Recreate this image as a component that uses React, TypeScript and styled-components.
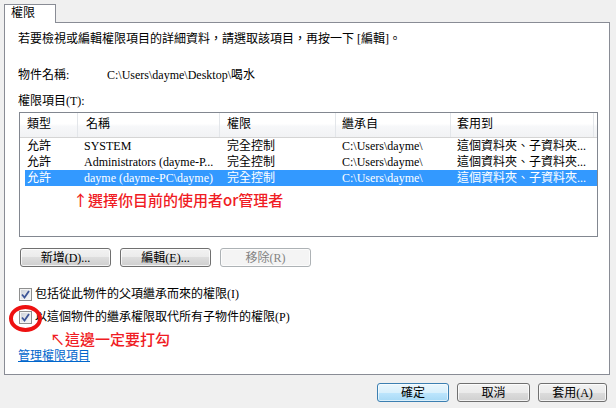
import React from "react";
import styled, { createGlobalStyle } from "styled-components";

const FONT = `"Liberation Serif", "Noto Sans CJK TC", serif`;
const CJK = `"Noto Sans CJK TC", "Liberation Sans", sans-serif`;

const Global = createGlobalStyle`
  html, body { margin: 0; padding: 0; background: #f0f0f0; }
  body { font-family: ${FONT}; font-size: 12px; color: #000; }
  #root { width: 616px; height: 408px; }
`;

const Window = styled.div`
  width: 616px;
  height: 408px;
  box-sizing: border-box;
  padding: 4px 6px 0 4px;
  display: flex;
  flex-direction: column;
  background: #f0f0f0;
  overflow: hidden;
`;

const TabStrip = styled.div`
  display: flex;
  height: 18px;
  position: relative;
  z-index: 1;
`;

const Tab = styled.div`
  width: 52px;
  height: 19px;
  box-sizing: border-box;
  border: 1px solid #898c95;
  border-bottom: none;
  background: #fff;
  padding-left: 6px;
  line-height: 16px;
`;

const Panel = styled.div`
  width: 606px;
  height: 353px;
  box-sizing: border-box;
  border: 1px solid #898c95;
  background: #fff;
  padding: 8px 0 0 13px;
  display: flex;
  flex-direction: column;
`;

const Line = styled.div<{ $mt?: number }>`
  line-height: 16px;
  height: 16px;
  margin-top: ${(p) => p.$mt ?? 0}px;
  white-space: nowrap;
`;

const FieldRow = styled.div`
  display: flex;
  line-height: 16px;
  height: 16px;
  margin-top: 20px;
`;

const FieldLabel = styled.span`
  width: 89px;
`;

const ListView = styled.div`
  margin: 3px 0 0 1px;
  width: 579px;
  height: 125px;
  box-sizing: border-box;
  border: 1px solid #828790;
  background: #fff;
  display: flex;
  flex-direction: column;
  overflow: hidden;
`;

const Header = styled.div`
  display: grid;
  grid-template-columns: 58px 142px 116px 115px 143px 1fr;
  height: 25px;
  box-sizing: border-box;
  border-bottom: 1px solid #d5d5d5;
  background: linear-gradient(#ffffff, #ffffff 45%, #f7f8fa 55%, #f1f2f4);
`;

const HeaderCell = styled.div<{ $pl: number; $last?: boolean }>`
  padding-left: ${(p) => p.$pl}px;
  line-height: 23px;
  border-right: ${(p) => (p.$last ? "none" : "1px solid #e3e6ea")};
`;

const Row = styled.div<{ $sel?: boolean }>`
  display: grid;
  grid-template-columns: 53px 142px 116px 115px 1fr;
  margin-left: 5px;
  height: 16px;
  line-height: 16px;
  background: ${(p) => (p.$sel ? "#3399ff" : "transparent")};
  color: ${(p) => (p.$sel ? "#fff" : "#000")};
`;

const Cell = styled.div<{ $pl: number }>`
  padding-left: ${(p) => p.$pl}px;
  white-space: nowrap;
  overflow: hidden;
`;

const Note = styled.div<{ $ml: number; $mt: number; $lh: number }>`
  font-family: ${CJK};
  font-size: 15px;
  font-weight: 500;
  color: #f01c24;
  line-height: ${(p) => p.$lh}px;
  height: ${(p) => p.$lh}px;
  margin-left: ${(p) => p.$ml}px;
  margin-top: ${(p) => p.$mt}px;
  white-space: nowrap;
`;

const ButtonRow = styled.div`
  display: flex;
  gap: 9px;
  margin: 11px 0 0 2px;
`;

type Variant = "normal" | "default" | "disabled";

const Button = styled.button<{ $w: number; $v?: Variant }>`
  width: ${(p) => p.$w}px;
  height: 19px;
  box-sizing: border-box;
  padding: 0;
  border-radius: 3px;
  font-family: ${FONT};
  font-size: 12px;
  line-height: 16px;
  cursor: default;
  border: 1px solid
    ${(p) => (p.$v === "default" ? "#3c7fb1" : p.$v === "disabled" ? "#adb2b5" : "#707070")};
  color: ${(p) => (p.$v === "disabled" ? "#838383" : "#000")};
  background: ${(p) =>
    p.$v === "default"
      ? "linear-gradient(#eaf6fd, #d9f0fc 50%, #bee6fd 50%, #a7d9f5)"
      : p.$v === "disabled"
      ? "#f4f4f4"
      : "linear-gradient(#f2f2f2, #ebebeb 50%, #dddddd 50%, #cfcfcf)"};
  box-shadow: inset 0 0 0 1px
    ${(p) => (p.$v === "default" ? "rgba(255,255,255,0.6)" : "rgba(255,255,255,0.75)")};
`;

const CheckRow = styled.label<{ $mt: number }>`
  display: flex;
  align-items: center;
  gap: 3px;
  height: 16px;
  line-height: 16px;
  margin: ${(p) => p.$mt}px 0 0 1px;
  position: relative;
  white-space: nowrap;
`;

const Box = styled.span`
  width: 13px;
  height: 13px;
  box-sizing: border-box;
  border: 1px solid #8e8f8f;
  background: linear-gradient(135deg, #c9ced6, #eef0f2 70%, #f8f8f8);
  box-shadow: inset 0 0 0 1px #f4f4f4;
  display: flex;
  align-items: center;
  justify-content: center;
  flex: none;
`;

const Circle = styled.span`
  position: absolute;
  left: -10px;
  top: -4px;
  width: 33px;
  height: 27px;
  box-sizing: border-box;
  border: 4px solid #ee1111;
  border-radius: 50%;
`;

const Link = styled.a`
  display: block;
  line-height: 16px;
  height: 16px;
  margin-top: 1px;
  color: #0066cc;
  text-decoration: underline;
  font-family: ${CJK};
  font-size: 12px;
  width: max-content;
`;

const Footer = styled.div`
  display: flex;
  justify-content: flex-end;
  gap: 8px;
  margin-top: 8px;
  padding-right: 3px;
`;

const Check = () => (
  <svg width="9" height="9" viewBox="0 0 9 9">
    <polyline points="1,4.5 3.5,7.5 8,1" fill="none" stroke="#3d5597" strokeWidth="1.8" />
  </svg>
);

const headers = [
  { t: "類型", pl: 7 },
  { t: "名稱", pl: 8 },
  { t: "權限", pl: 7 },
  { t: "繼承自", pl: 6 },
  { t: "套用到", pl: 6 },
];

const rows = [
  { type: "允許", name: "SYSTEM", perm: "完全控制", from: "C:\\Users\\dayme\\", to: "這個資料夾、子資料夾...", sel: false },
  { type: "允許", name: "Administrators (dayme-P...", perm: "完全控制", from: "C:\\Users\\dayme\\", to: "這個資料夾、子資料夾...", sel: false },
  { type: "允許", name: "dayme (dayme-PC\\dayme)", perm: "完全控制", from: "C:\\Users\\dayme\\", to: "這個資料夾、子資料夾...", sel: true },
];

const pads = [2, 6, 7, 6, 6];

export default function App() {
  return (
    <>
      <Global />
      <Window>
        <TabStrip>
          <Tab>權限</Tab>
        </TabStrip>
        <Panel>
          <Line>若要檢視或編輯權限項目的詳細資料，請選取該項目，再按一下 [編輯]。</Line>
          <FieldRow>
            <FieldLabel>物件名稱:</FieldLabel>
            <span>{"C:\\Users\\dayme\\Desktop\\喝水"}</span>
          </FieldRow>
          <Line $mt={10}>權限項目(T):</Line>
          <ListView>
            <Header>
              {headers.map((h) => (
                <HeaderCell key={h.t} $pl={h.pl}>
                  {h.t}
                </HeaderCell>
              ))}
              <HeaderCell $pl={0} $last />
            </Header>
            {rows.map((r, i) => (
              <Row key={i} $sel={r.sel}>
                {[r.type, r.name, r.perm, r.from, r.to].map((v, j) => (
                  <Cell key={j} $pl={pads[j]}>
                    {v}
                  </Cell>
                ))}
              </Row>
            ))}
            <Note $ml={53} $mt={6} $lh={16}>↑選擇你目前的使用者or管理者</Note>
          </ListView>
          <ButtonRow>
            <Button $w={91}>新增(D)...</Button>
            <Button $w={91}>編輯(E)...</Button>
            <Button $w={91} $v="disabled">移除(R)</Button>
          </ButtonRow>
          <CheckRow $mt={19}>
            <Box>
              <Check />
            </Box>
            包括從此物件的父項繼承而來的權限(I)
          </CheckRow>
          <CheckRow $mt={7}>
            <Box>
              <Check />
            </Box>
            以這個物件的繼承權限取代所有子物件的權限(P)
            <Circle />
          </CheckRow>
          <Note $ml={32} $mt={7} $lh={14}>↖這邊一定要打勾</Note>
          <Link href="#">管理權限項目</Link>
        </Panel>
        <Footer>
          <Button $w={72} $v="default">確定</Button>
          <Button $w={73}>取消</Button>
          <Button $w={69}>套用(A)</Button>
        </Footer>
      </Window>
    </>
  );
}
